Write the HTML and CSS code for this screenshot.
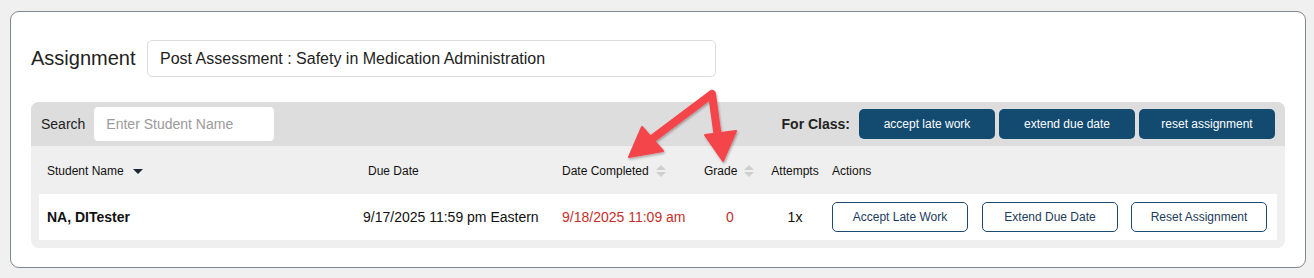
FILE: index.html
```html
<!DOCTYPE html>
<html>
<head>
	<meta charset="utf-8">
	<title>Assignment</title>
	<link rel="stylesheet" href="styles.css">
</head>
<body>
	<div class="card">
		<div class="assign-row">
			<label class="assign-label">Assignment</label>
			<div class="assign-input">Post Assessment : Safety in Medication Administration</div>
		</div>
		<div class="panel">
			<div class="toolbar">
				<span class="search-label">Search</span>
				<div class="search-box">Enter Student Name</div>
				<span class="spacer"></span>
				<span class="for-class">For Class:</span>
				<button class="btn-dark">accept late work</button>
				<button class="btn-dark">extend due date</button>
				<button class="btn-dark">reset assignment</button>
			</div>
			<div class="grid head">
				<div class="c-name">Student Name <span class="caret"></span></div>
				<div class="c-due">Due Date</div>
				<div class="c-done">Date Completed <span class="sort"><i class="up"></i><i class="down"></i></span></div>
				<div class="c-grade">Grade <span class="sort"><i class="up"></i><i class="down"></i></span></div>
				<div class="c-att">Attempts</div>
				<div class="c-act">Actions</div>
			</div>
			<div class="grid row">
				<div class="c-name strong">NA, DITester</div>
				<div class="c-due">9/17/2025 11:59 pm Eastern</div>
				<div class="c-done late">9/18/2025 11:09 am</div>
				<div class="c-grade late">0</div>
				<div class="c-att">1x</div>
				<div class="c-act">
					<button class="btn-line">Accept Late Work</button>
					<button class="btn-line">Extend Due Date</button>
					<button class="btn-line">Reset Assignment</button>
				</div>
			</div>
		</div>
	</div>

	<svg class="arrows" width="1314" height="278" viewBox="0 0 1314 278">
		<defs>
			<filter id="shade" x="-20%" y="-20%" width="140%" height="140%">
				<feDropShadow dx="1" dy="1.5" stdDeviation="1.2" flood-color="#000" flood-opacity="0.3"/>
			</filter>
		</defs>
		<g filter="url(#shade)" fill="#f4454b" stroke="#f4454b">
			<polyline points="648,142 712,94 718,138" fill="none" stroke-width="8" stroke-linejoin="round" stroke-linecap="round"/>
			<polygon points="629,157 642,127 663,151" stroke-width="2" stroke-linejoin="round"/>
			<polygon points="723,161 705,135 736,131" stroke-width="2" stroke-linejoin="round"/>
		</g>
	</svg>
</body>
</html>
```
FILE: styles.css
```css
html, body {
	margin: 0;
	padding: 0;
}
body {
	background-color: #f0f0f0;
	font-family: "Liberation Sans", Arial, sans-serif;
	color: #222;
	position: relative;
	width: 1314px;
	height: 278px;
	overflow: hidden;
}
.card {
	margin: 11px 0 0 10px;
	box-sizing: border-box;
	width: 1296px;
	height: 257px;
	background: #fff;
	border: 1px solid #7d8a93;
	border-radius: 9px;
	padding: 28px 20px 0 20px;
}
.assign-row {
	display: flex;
	align-items: center;
	height: 37px;
}
.assign-label {
	font-size: 20px;
	color: #222;
	width: 116px;
}
.assign-input {
	width: 569px;
	height: 37px;
	box-sizing: border-box;
	border: 1px solid #dcdcdc;
	border-radius: 5px;
	padding-left: 12px;
	font-size: 16px;
	line-height: 35px;
	color: #222;
}
.panel {
	margin-top: 25px;
	background: #efefef;
	border-radius: 8px;
	padding-bottom: 8px;
	width: 1254px;
}
.toolbar {
	display: flex;
	align-items: center;
	height: 44px;
	background: #dddddd;
	border-radius: 8px 8px 0 0;
	padding: 0 10px;
}
.search-label {
	font-size: 14px;
	color: #222;
	margin-right: 9px;
}
.search-box {
	width: 180px;
	height: 34px;
	box-sizing: border-box;
	background: #fff;
	border-radius: 4px;
	padding-left: 12px;
	font-size: 14px;
	line-height: 34px;
	color: #9a9a9a;
}
.spacer {
	flex: 1;
}
.for-class {
	font-size: 14px;
	font-weight: bold;
	color: #222;
	margin-right: 9px;
}
.btn-dark {
	width: 136px;
	height: 30px;
	margin-left: 4px;
	border: 0;
	border-radius: 5px;
	background: #124a70;
	color: #fff;
	font-family: "Liberation Sans", Arial, sans-serif;
	font-size: 12px;
	padding: 0;
}
.for-class + .btn-dark {
	margin-left: 0;
}
.grid {
	display: grid;
	grid-template-columns: 321px 194px 142px 68px 62px 1fr;
	align-items: center;
	margin: 0 8px;
}
.head {
	height: 48px;
	font-size: 12px;
	color: #111;
	padding-top: 1px;
	box-sizing: border-box;
}
.head > div {
	padding-left: 8px;
	display: flex;
	align-items: center;
}
.head .c-att {
	padding-left: 0;
	justify-content: center;
}
.head .c-act {
	padding-left: 6px;
}
.row {
	height: 46px;
	background: #fff;
	font-size: 14px;
	color: #111;
}
.row > div {
	padding-left: 8px;
}
.row .c-due {
	padding-left: 3px;
}
.row .c-grade,
.row .c-att {
	padding-left: 0;
	text-align: center;
}
.row .c-act {
	padding-left: 6px;
	display: flex;
}
.strong {
	font-weight: bold;
}
.late {
	color: #c4302b;
}
.caret {
	display: inline-block;
	margin-left: 9px;
	margin-top: 2px;
	border-left: 5px solid transparent;
	border-right: 5px solid transparent;
	border-top: 5px solid #1c2733;
}
.sort {
	display: inline-flex;
	flex-direction: column;
	margin-left: 7px;
	gap: 2px;
}
.sort i {
	display: block;
	border-left: 5px solid transparent;
	border-right: 5px solid transparent;
}
.sort .up {
	border-bottom: 5px solid #cfcfcf;
}
.sort .down {
	border-top: 5px solid #cfcfcf;
}
.btn-line {
	width: 136px;
	height: 30px;
	box-sizing: border-box;
	background: #fff;
	border: 1px solid #1d4a6e;
	border-radius: 5px;
	color: #1d3b5a;
	font-family: "Liberation Sans", Arial, sans-serif;
	font-size: 12px;
	padding: 0;
	margin-right: 14px;
}
.btn-line:last-child {
	margin-right: 0;
}
.btn-line + .btn-line + .btn-line {
	margin-left: -1px;
}
.arrows {
	position: absolute;
	left: 0;
	top: 0;
	pointer-events: none;
}
```
